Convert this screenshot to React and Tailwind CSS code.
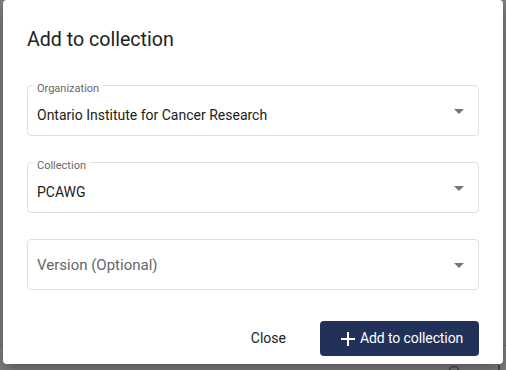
import React from 'react';

function ArrowDrop() {
  return (
    <svg viewBox="0 0 24 24" className="w-6 h-6 fill-[#757575]">
      <path d="M7 10l5 5 5-5z" />
    </svg>
  );
}

function SelectField({ label, value, placeholder }) {
  return (
    <div className="relative h-[51px] rounded-[4px] border border-[#e0e0e0] flex items-center pl-[9px] pr-[7px]">
      {label && (
        <span className="absolute left-[5px] -top-[4px] px-[4px] bg-white text-[11px] leading-[14px] text-[#666]">
          {label}
        </span>
      )}
      <div className="flex-1 pt-[8px]">
        {value ? (
          <span className="text-[14px] text-[#212121]">{value}</span>
        ) : (
          <span className="text-[15px] text-[#666] relative -top-[4px]">{placeholder}</span>
        )}
      </div>
      <ArrowDrop />
    </div>
  );
}

export default function App() {
  return (
    <div className="relative w-[506px] h-[370px] overflow-hidden bg-[#7f7f7f] font-['Roboto',sans-serif]">
      {/* page behind the overlay */}
      <div className="h-[345px]" />
      <div className="h-px bg-[#6c6c6c]" />
      <div className="flex justify-end items-start pr-[6px] pt-[19px] gap-[38px]">
        <svg width="12" height="12" viewBox="0 0 12 12" className="fill-none stroke-[#4a4a4a] stroke-[1.6]">
          <circle cx="6" cy="6" r="4.5" />
        </svg>
        <div className="w-[2px] h-[6px] bg-[#4a4a4a]" />
      </div>

      {/* dialog */}
      <div className="absolute left-[3px] top-0 w-[500px] h-[364px] bg-white rounded-[4px] shadow-[0_6px_18px_rgba(0,0,0,0.35)] px-[24px] flex flex-col">
        <h2 className="pt-[24px] text-[19.6px] leading-[32px] text-[#212121] font-normal">Add to collection</h2>
        <div className="mt-[29px] flex flex-col gap-[26px]">
          <SelectField label="Organization" value="Ontario Institute for Cancer Research" />
          <SelectField label="Collection" value="PCAWG" />
          <SelectField placeholder="Version (Optional)" />
        </div>
        <div className="mt-[31px] flex justify-end items-center gap-[26px]">
          <button className="px-[8px] h-[35px] text-[14px] text-[#212121]">Close</button>
          <button className="h-[35px] w-[159px] rounded-[4px] bg-[#213159] text-white text-[14px] flex items-center pl-[16px]">
            <svg viewBox="0 0 24 24" className="w-6 h-6 fill-white">
              <path d="M19 13h-6v6h-2v-6H5v-2h6V5h2v6h6z" />
            </svg>
            <span className="tracking-[-0.1px]">Add to collection</span>
          </button>
        </div>
      </div>
    </div>
  );
}
